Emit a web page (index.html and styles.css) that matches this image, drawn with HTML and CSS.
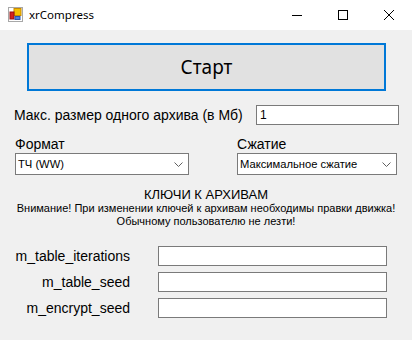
FILE: index.html
```html
<!DOCTYPE html>
<html lang="ru">
<head>
<meta charset="utf-8">
<title>xrCompress</title>
<link rel="stylesheet" href="styles.css">
</head>
<body>
<div class="window">
  <div class="titlebar">
    <svg class="app-icon" width="16" height="16" viewBox="0 0 16 16">
      <rect x="0.5" y="0.5" width="14" height="14" fill="#fff" stroke="#a8a8a8"/>
      <rect x="6" y="1.5" width="7" height="7" fill="#f5c000" stroke="#c88a00"/>
      <rect x="2" y="5" width="4" height="7" fill="#d42020" stroke="#9a1010"/>
      <rect x="7" y="9.5" width="5" height="3" fill="#4d7fe0" stroke="#2a55b0"/>
    </svg>
    <span class="title">xrCompress</span>
    <div class="controls">
      <span class="ctl"><svg width="10" height="10" viewBox="0 0 10 10"><line x1="0" y1="5.5" x2="10" y2="5.5" stroke="#000" stroke-width="1"/></svg></span>
      <span class="ctl"><svg width="10" height="10" viewBox="0 0 10 10"><rect x="0.5" y="0.5" width="9" height="9" fill="none" stroke="#000" stroke-width="1"/></svg></span>
      <span class="ctl"><svg width="10" height="10" viewBox="0 0 10 10"><path d="M0 0 L10 10 M10 0 L0 10" stroke="#000" stroke-width="1"/></svg></span>
    </div>
  </div>
  <div class="content">
    <div class="start-btn">Старт</div>
    <div class="row-size">
      <span class="label">Макс. размер одного архива (в Мб)</span>
      <div class="input size-input">1</div>
    </div>
    <div class="row-combos">
      <div class="col col-format">
        <span class="label">Формат</span>
        <div class="combo"><span>ТЧ (WW)</span><svg width="9" height="5" viewBox="0 0 9 5"><path d="M0.5 0.5 L4.5 4.5 L8.5 0.5" fill="none" stroke="#606060"/></svg></div>
      </div>
      <div class="col col-comp">
        <span class="label">Сжатие</span>
        <div class="combo"><span>Максимальное сжатие</span><svg width="9" height="5" viewBox="0 0 9 5"><path d="M0.5 0.5 L4.5 4.5 L8.5 0.5" fill="none" stroke="#606060"/></svg></div>
      </div>
    </div>
    <div class="keys-head">КЛЮЧИ К АРХИВАМ</div>
    <div class="warning">Внимание! При изменении ключей к архивам необходимы правки движка!<br>Обычному пользователю не лезти!</div>
    <div class="fields">
      <span class="flabel">m_table_iterations</span><div class="input field"></div>
      <span class="flabel">m_table_seed</span><div class="input field"></div>
      <span class="flabel">m_encrypt_seed</span><div class="input field"></div>
    </div>
  </div>
</div>
</body>
</html>
```
FILE: styles.css
```css
* { box-sizing: border-box; }
html, body { margin: 0; padding: 0; }
body {
  width: 412px;
  height: 340px;
  background: #f0f0f0;
  font-family: "Liberation Sans", Arial, sans-serif;
  color: #000;
  overflow: hidden;
}
.titlebar {
  height: 30px;
  background: #fff;
  display: flex;
  align-items: center;
  padding-left: 8px;
}
.app-icon { display: block; margin-right: 5px; }
.title {
  font-family: "Noto Sans", sans-serif;
  font-size: 11.5px;
  margin-top: -1px;
}
.controls {
  margin-left: auto;
  display: flex;
  height: 30px;
}
.ctl {
  width: 46px;
  height: 30px;
  display: flex;
  align-items: center;
  justify-content: center;
}
.ctl svg { display: block; }
.content {
  padding-top: 13px;
}
.start-btn {
  margin-left: 27px;
  width: 359px;
  height: 48px;
  background: #e1e1e1;
  border: 2px solid #0078d7;
  display: flex;
  align-items: center;
  justify-content: center;
  font-family: "Noto Sans", sans-serif;
  font-size: 19px;
}
.label { font-size: 14px; }
.input {
  background: #fff;
  border: 1px solid #7a7a7a;
  height: 20px;
}
.row-size {
  margin-top: 14px;
  display: flex;
  align-items: center;
  padding-left: 14px;
  height: 20px;
}
.size-input {
  margin-left: auto;
  margin-right: 13px;
  width: 143px;
  font-size: 12px;
  padding-left: 3px;
  line-height: 18px;
}
.row-combos {
  margin-top: 11px;
  display: flex;
  padding-left: 15px;
}
.col { display: flex; flex-direction: column; }
.col-format { width: 174px; }
.col-comp { width: 160px; margin-left: 48px; }
.col .label { height: 16px; line-height: 16px; margin-bottom: 1px; }
.combo {
  height: 22px;
  background: #fff;
  border: 1px solid #7a7a7a;
  display: flex;
  align-items: center;
  justify-content: space-between;
  padding: 0 5px 0 2px;
  font-size: 11.2px;
}
.combo svg { display: block; }
.keys-head {
  margin-top: 13px;
  text-align: center;
  font-size: 13px;
  line-height: 14px;
}
.warning {
  text-align: center;
  font-size: 11px;
  line-height: 13px;
}
.fields {
  margin-top: 18px;
  display: grid;
  grid-template-columns: 130px 229px;
  column-gap: 28px;
  row-gap: 6px;
  align-items: center;
}
.flabel {
  text-align: right;
  font-size: 14px;
}
.field { width: 229px; }
```
